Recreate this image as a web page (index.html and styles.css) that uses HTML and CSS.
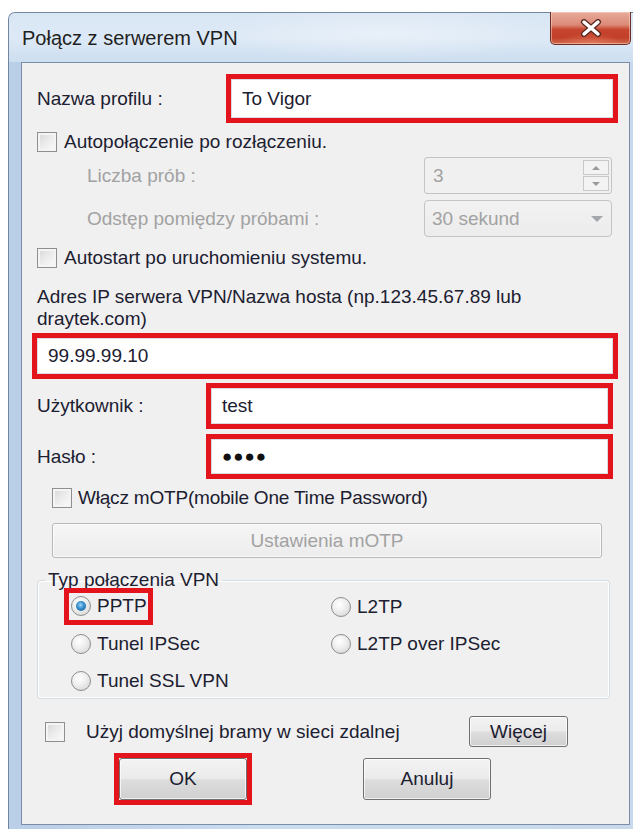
FILE: index.html
```html
<!DOCTYPE html>
<html lang="pl">
<head>
<meta charset="utf-8">
<title>Połącz z serwerem VPN</title>
<link rel="stylesheet" href="styles.css">
</head>
<body>
<div class="window">
  <div class="titlebar">
    <span class="title">Połącz z serwerem VPN</span>
    <button class="close" aria-label="Zamknij">
      <svg width="22" height="18" viewBox="0 0 22 18">
        <path d="M4 3 L18 15 M18 3 L4 15" stroke="#5a2a22" stroke-width="6" stroke-linecap="round"/>
        <path d="M4 3 L18 15 M18 3 L4 15" stroke="#ffffff" stroke-width="3.4" stroke-linecap="round"/>
      </svg>
    </button>
  </div>
  <div class="client">

    <div class="row row-profile">
      <span class="label label-profile">Nazwa profilu :</span>
      <div class="mark mark-profile"><div class="field">To Vigor</div></div>
    </div>

    <div class="row row-check row-auto">
      <span class="check"></span>
      <span class="check-text">Autopołączenie po rozłączeniu.</span>
    </div>

    <div class="row row-spin">
      <span class="label dim label-indent">Liczba prób :</span>
      <div class="spin">
        <span class="spin-value">3</span>
        <span class="spin-btns">
          <span class="spin-btn"><i class="tri tri-up"></i></span>
          <span class="spin-btn"><i class="tri tri-down"></i></span>
        </span>
      </div>
    </div>

    <div class="row row-combo">
      <span class="label dim label-indent">Odstęp pomiędzy próbami :</span>
      <div class="combo">
        <span class="combo-value">30 sekund</span>
        <i class="combo-arrow"></i>
      </div>
    </div>

    <div class="row row-check row-autostart">
      <span class="check"></span>
      <span class="check-text">Autostart po uruchomieniu systemu.</span>
    </div>

    <p class="host-label">Adres IP serwera VPN/Nazwa hosta (np.123.45.67.89 lub draytek.com)</p>

    <div class="row row-host">
      <div class="mark mark-host"><div class="field">99.99.99.10</div></div>
    </div>

    <div class="row row-user">
      <span class="label label-user">Użytkownik :</span>
      <div class="mark mark-user"><div class="field">test</div></div>
    </div>

    <div class="row row-pass">
      <span class="label label-user">Hasło :</span>
      <div class="mark mark-pass"><div class="field field-pass">●●●●</div></div>
    </div>

    <div class="row row-check row-motp">
      <span class="check"></span>
      <span class="check-text tight">Włącz mOTP(mobile One Time Password)</span>
    </div>

    <button class="btn btn-disabled btn-motp" disabled>Ustawienia mOTP</button>

    <fieldset class="group">
      <legend>Typ połączenia VPN</legend>
      <div class="radios">
        <div class="radio-cell"><span class="mark mark-radio"><span class="radio checked"></span><span class="radio-text">PPTP</span></span></div>
        <div class="radio-cell"><span class="radio"></span><span class="radio-text">L2TP</span></div>
        <div class="radio-cell"><span class="radio"></span><span class="radio-text">Tunel IPSec</span></div>
        <div class="radio-cell"><span class="radio"></span><span class="radio-text">L2TP over IPSec</span></div>
        <div class="radio-cell"><span class="radio"></span><span class="radio-text">Tunel SSL VPN</span></div>
      </div>
    </fieldset>

    <div class="row row-gateway">
      <span class="check"></span>
      <span class="check-text gateway-text">Użyj domyślnej bramy w sieci zdalnej</span>
      <button class="btn btn-more">Więcej</button>
    </div>

    <div class="row row-actions">
      <div class="mark mark-ok"><button class="btn btn-ok">OK</button></div>
      <button class="btn btn-cancel">Anuluj</button>
    </div>

  </div>
</div>
</body>
</html>
```

FILE: styles.css
```css
* { box-sizing: border-box; }

html, body {
  margin: 0;
  padding: 0;
  background: #ffffff;
  overflow: hidden;
}

body {
  width: 633px;
  height: 829px;
  font-family: "Liberation Sans", Arial, sans-serif;
  font-size: 19px;
  color: #1c2030;
}

/* Aero window frame */
.window {
  margin: 12px 0 0 8px;
  width: 625px;
  height: 817px;
  border: 1px solid #72879f;
  border-right: none;
  border-bottom: none;
  border-radius: 7px 0 0 0;
  background: linear-gradient(90deg, #b9cee7 0%, #cadcf0 40%, #c8d9ed 100%);
  padding: 0 0 4px 12px;
  display: flex;
  flex-direction: column;
}

.titlebar {
  height: 49px;
  margin-left: -12px;
  padding-left: 13px;
  display: flex;
  align-items: flex-start;
  justify-content: space-between;
  background:
    radial-gradient(ellipse 40% 80% at 60% 40%, rgba(255, 255, 255, 0.35), rgba(255, 255, 255, 0) 70%),
    linear-gradient(180deg, #d9e6f4 0%, #dde9f6 50%, #cddef0 100%);
  border-radius: 6px 0 0 0;
}

.title {
  margin-top: 14px;
  font-size: 20px;
  color: #1f1f1f;
}

.close {
  margin: -1px 2px 0 0;
  width: 81px;
  height: 33px;
  padding: 0;
  border: 1px solid #6b2e25;
  border-top: none;
  border-radius: 0 0 5px 5px;
  background:
    radial-gradient(ellipse 60% 50% at 50% 100%, rgba(240, 140, 110, 0.55), rgba(240, 140, 110, 0) 70%),
    linear-gradient(180deg, #e8ab9b 0%, #dc8a77 40%, #c6452e 55%, #c23f28 80%, #cf6a50 100%);
  box-shadow: inset 0 0 0 1px rgba(255, 220, 210, 0.5);
  display: flex;
  align-items: center;
  justify-content: center;
}

/* Dialog client area */
.client {
  flex: 1;
  margin-right: 3px;
  background: #f0f0f0;
  border: 1px solid #7b8ea6;
  padding: 0 0 0 15px;
  display: flex;
  flex-direction: column;
}

.row {
  display: flex;
  align-items: center;
}

.label { white-space: nowrap; }
.dim { color: #a2a2a2; }

/* Red highlight frames around important controls */
.mark {
  border: 5px solid #e3141c;
  display: flex;
}

.field {
  flex: 1;
  background: #ffffff;
  border: 1px solid #d9dde3;
  display: flex;
  align-items: center;
  padding-left: 10px;
  color: #1c2030;
}

.row-profile { margin-top: 11px; height: 49px; }
.label-profile { width: 189px; }
.mark-profile { width: 392px; height: 49px; }

.row-check { height: 22px; }
.check {
  width: 20px;
  height: 20px;
  flex: none;
  border: 1px solid #8e8f8f;
  background: linear-gradient(135deg, #d6d6d6 0%, #ececec 50%, #fbfbfb 100%);
  box-shadow: inset 0 0 0 2px #f4f4f4;
}
.check-text { margin-left: 7px; white-space: nowrap; }
.check-text.tight { margin-left: 6px; letter-spacing: -0.2px; }

.row-auto { margin-top: 8px; }

.row-spin { margin-top: 4px; height: 37px; }
.label-indent { width: 387px; padding-left: 50px; }

.spin {
  width: 188px;
  height: 37px;
  border: 1px solid #c4c4c4;
  border-radius: 3px;
  background: #f0f0f0;
  display: flex;
  align-items: center;
  justify-content: space-between;
  padding: 0 2px 0 8px;
}
.spin-value { color: #a2a2a2; }
.spin-btns {
  display: flex;
  flex-direction: column;
  gap: 1px;
}
.spin-btn {
  width: 26px;
  height: 15px;
  border: 1px solid #c9c9c9;
  background: #f3f3f3;
  display: flex;
  align-items: center;
  justify-content: center;
}
.tri {
  width: 0;
  height: 0;
  border-left: 4px solid transparent;
  border-right: 4px solid transparent;
}
.tri-up { border-bottom: 4px solid #9a9a9a; }
.tri-down { border-top: 4px solid #9a9a9a; }

.row-combo { margin-top: 6px; height: 37px; }
.combo {
  width: 188px;
  height: 37px;
  border: 1px solid #c4c4c4;
  border-radius: 4px;
  background: linear-gradient(180deg, #f2f2f2 0%, #ececec 100%);
  display: flex;
  align-items: center;
  justify-content: space-between;
  padding: 0 8px 0 7px;
}
.combo-value { color: #a2a2a2; }
.combo-arrow {
  width: 0;
  height: 0;
  border-left: 6px solid transparent;
  border-right: 6px solid transparent;
  border-top: 6px solid #a4a8ad;
}

.row-autostart { margin-top: 10px; }

.host-label {
  margin: 17px 0 0 0;
  width: 520px;
  line-height: 22px;
}

.row-host { margin-top: 3px; margin-left: -5px; }
.mark-host { width: 586px; height: 46px; }

.row-user { margin-top: 4px; height: 46px; }
.label-user { width: 169px; }
.mark-user { width: 407px; height: 46px; }

.row-pass { margin-top: 5px; height: 45px; }
.mark-pass { width: 407px; height: 45px; }
.field-pass { font-size: 17px; letter-spacing: 1px; color: #111; }

.row-motp { margin-top: 8px; margin-left: 15px; }

/* Push buttons */
.btn {
  font-family: inherit;
  font-size: 19px;
  color: #1c2030;
  border: 1px solid #707070;
  border-radius: 3px;
  background: linear-gradient(180deg, #f3f3f3 0%, #ebebeb 48%, #dddddd 52%, #d0d0d0 100%);
  box-shadow: inset 0 0 0 1px rgba(255, 255, 255, 0.7);
  padding: 0;
}

.btn-disabled {
  color: #a2a2a2;
  border-color: #b8b8b8;
  background: linear-gradient(180deg, #f6f6f6 0%, #f1f1f1 50%, #ececec 100%);
}

.btn-motp {
  margin: 14px 0 0 15px;
  width: 550px;
  height: 35px;
  flex: none;
}

/* Group box with the VPN type radios */
.group {
  margin: 11px 0 0 0;
  width: 573px;
  height: 130px;
  padding: 0;
  border: 1px solid #d3dce3;
  border-radius: 3px;
  box-shadow: inset 0 0 0 1px #ffffff;
}
.group legend {
  margin-left: 7px;
  padding: 0 3px;
  color: #1c2030;
}

.radios {
  display: grid;
  grid-template-columns: 260px 1fr;
  grid-auto-rows: 37px;
  margin-top: -3px;
  padding-left: 33px;
}
.radio-cell {
  display: flex;
  align-items: center;
}
.radio {
  width: 20px;
  height: 20px;
  flex: none;
  border-radius: 50%;
  border: 1px solid #8d8d8d;
  background: radial-gradient(circle at 40% 35%, #ffffff 0%, #f0f0f0 40%, #cfcfcf 100%);
  position: relative;
}
.radio.checked::after {
  content: "";
  position: absolute;
  left: 4px;
  top: 4px;
  width: 10px;
  height: 10px;
  border-radius: 50%;
  background: radial-gradient(circle at 45% 40%, #9fd7f7 0%, #3c94cf 40%, #0d4d86 100%);
}
.radio-text { margin-left: 6px; white-space: nowrap; }

.mark-radio {
  margin-left: -7px;
  padding: 2px 1px 3px 2px;
  align-items: center;
}

.row-gateway { margin: 17px 0 0 8px; height: 31px; }
.gateway-text { margin-left: 21px; width: 383px; }
.btn-more { width: 99px; height: 31px; }

.row-actions { margin: 6px 0 0 77px; height: 52px; }
.mark-ok { width: 138px; height: 52px; }
.btn-ok { flex: 1; }
.btn-cancel { margin-left: 111px; width: 128px; height: 42px; }
```
